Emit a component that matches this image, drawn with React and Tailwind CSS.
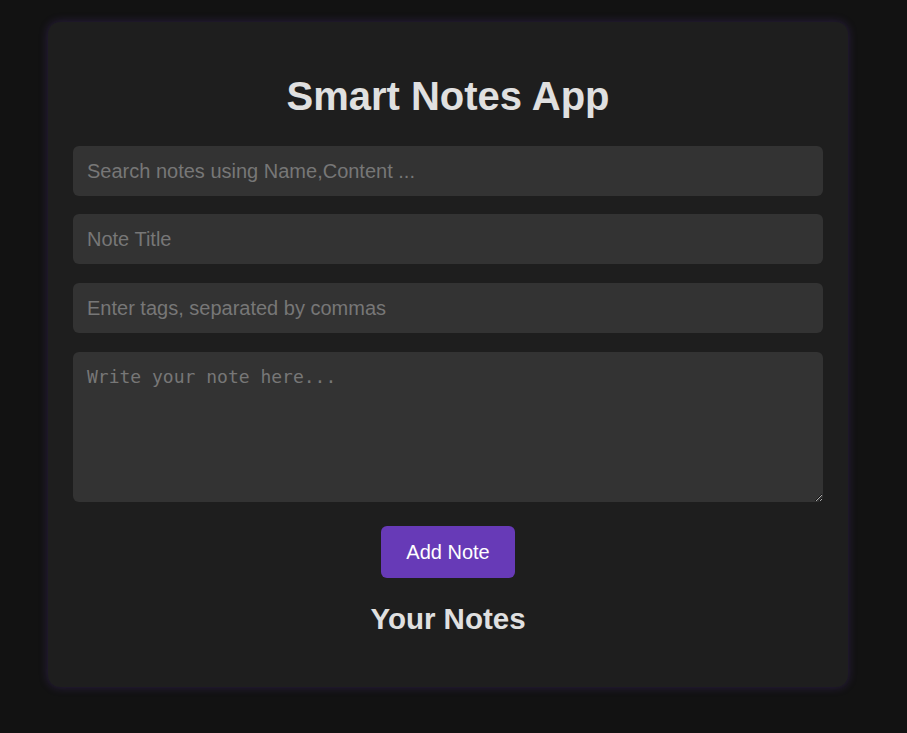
export default function App() {
  return (
    <div
      className="min-h-screen bg-[#121212] pt-[22px] pb-[46px] pl-[48px]"
      style={{ fontFamily: '"Liberation Sans", Arial, sans-serif' }}
    >
      <div className="w-[800px] rounded-[12px] bg-[#1e1e1e] px-[25px] pt-[51px] pb-[51px] shadow-[0_0_10px_rgba(103,58,183,0.3)]">
        <h1 className="text-center text-[40px] leading-[46px] font-bold text-[#e0e0e0]">
          Smart Notes App
        </h1>

        <input
          type="text"
          placeholder="Search notes using Name,Content ..."
          className="mt-[27px] block h-[50px] w-full rounded-[6px] bg-[#333333] px-[14px] text-[20px] text-[#e0e0e0] placeholder:text-[#777777] outline-none"
        />
        <input
          type="text"
          placeholder="Note Title"
          className="mt-[18px] block h-[50px] w-full rounded-[6px] bg-[#333333] px-[14px] text-[20px] text-[#e0e0e0] placeholder:text-[#777777] outline-none"
        />
        <input
          type="text"
          placeholder="Enter tags, separated by commas"
          className="mt-[19px] block h-[50px] w-full rounded-[6px] bg-[#333333] px-[14px] text-[20px] text-[#e0e0e0] placeholder:text-[#777777] outline-none"
        />
        <textarea
          placeholder="Write your note here..."
          className="mt-[19px] block h-[150px] w-full rounded-[6px] bg-[#333333] px-[14px] pt-[11px] pb-[14px] text-[18px] text-[#e0e0e0] placeholder:text-[#777777] outline-none"
          style={{ fontFamily: '"DejaVu Sans Mono", monospace' }}
        />

        <div className="mt-[24px] flex justify-center">
          <button className="h-[52px] rounded-[6px] bg-[#673ab7] px-[25px] text-[20px] text-white">
            Add Note
          </button>
        </div>

        <h2 className="mt-[24px] text-center text-[29.5px] leading-[34px] font-bold text-[#e0e0e0]">
          Your Notes
        </h2>
      </div>
    </div>
  );
}
